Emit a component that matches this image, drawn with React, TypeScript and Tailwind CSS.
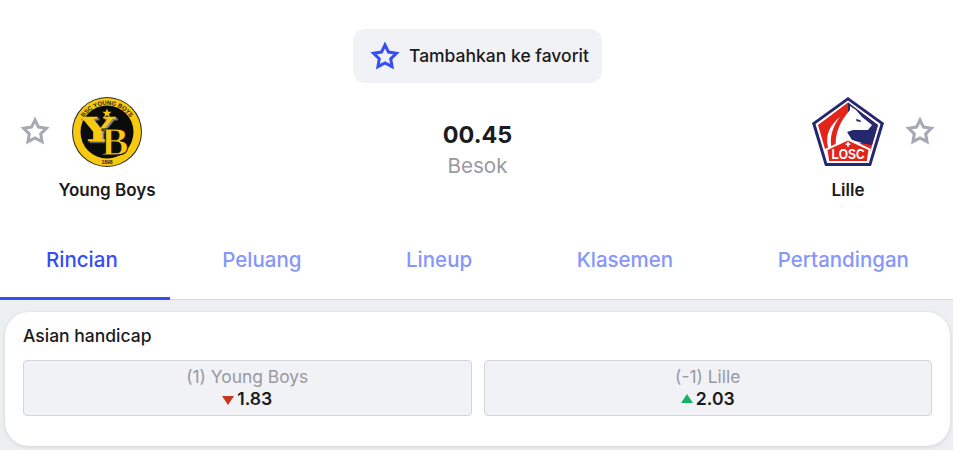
const TABS = ["Rincian", "Peluang", "Lineup", "Klasemen", "Pertandingan"];

function StarIcon({ className }: { className: string }) {
  return (
    <svg className={className} viewBox="0 0 30 30" aria-hidden="true">
      <polygon
        points="15,4 18.500,11.100 26.400,12.300 20.700,17.850 22.050,25.700 15,22 7.950,25.700 9.300,17.850 3.600,12.300 11.500,11.100"
        fill="none"
        stroke="currentColor"
        strokeWidth="3"
        strokeMiterlimit="6"
      />
    </svg>
  );
}

function YoungBoysLogo() {
  return (
    <svg width="70" height="70" viewBox="0 0 70 70" aria-hidden="true">
      <defs>
        <path id="yb-top" d="M7.800 35a27.200 27.200 0 0 1 54.400 0" />
        <filter id="yb-shadow" x="-20%" y="-20%" width="140%" height="140%">
          <feDropShadow dx="1.200" dy="1.500" stdDeviation="0" floodColor="#8d8d85" />
        </filter>
      </defs>
      <circle cx="35" cy="35" r="35" fill="#2a2a22" />
      <circle cx="35" cy="35" r="34" fill="#f8c90e" />
      <circle cx="35" cy="35" r="26.500" fill="#0b0b0b" />
      <text fontSize="6" fontWeight="700" fill="#20201a" fontFamily="Liberation Sans, sans-serif">
        <textPath href="#yb-top" startOffset="50%" textAnchor="middle">
          BSC YOUNG BOYS
        </textPath>
      </text>
      <text x="35" y="66.500" textAnchor="middle" fontSize="5" fontWeight="700" fill="#20201a" fontFamily="Liberation Sans, sans-serif">
        1898
      </text>
      <polygon points="35,11.500 36.200,14.700 39.600,14.800 36.900,16.900 37.900,20.200 35,18.300 32.100,20.200 33.100,16.900 30.400,14.800 33.800,14.700" fill="#f8c90e" />
      <text
        transform="translate(25.500 43.500) scale(1.5 1)"
        textAnchor="middle"
        fontSize="35"
        fontWeight="700"
        fill="#f8c90e"
        stroke="#f8c90e"
        strokeWidth="0.6"
        filter="url(#yb-shadow)"
        fontFamily="Liberation Serif, serif"
      >
        Y
      </text>
      <text
        x="43"
        y="58"
        textAnchor="middle"
        fontSize="41"
        fontWeight="700"
        fill="#f8c90e"
        stroke="#0b0b0b"
        strokeWidth="1"
        fontFamily="Liberation Serif, serif"
      >
        B
      </text>
    </svg>
  );
}

function LilleLogo() {
  return (
    <svg width="72" height="70" viewBox="0 0 72 70" aria-hidden="true">
      <polygon points="36,0 72,26 59,69 13,69 0,26" fill="#24286f" />
      <polygon points="36,3.500 68.500,27 56.800,66 15.200,66 3.500,27" fill="#ffffff" />
      <polygon points="36,5.500 66,28 55.500,64 16.500,64 6,28" fill="#e3241b" />
      <path d="M36 5.500l30 22.500-6 20-24-4z" fill="#24286f" />
      <path d="M38 9l6 4 6 7 10 8-4 5H41l-6 2 5 8 10 3-14 2-11 6c-3-10-1-25 13-41z" fill="#ffffff" />
      <path d="M28 20c-10 8-15 18-12 30l4 2c-3-10 0-22 8-32z" fill="#ffffff" />
      <path d="M44 22l4 1 1.500 2-5-.8z" fill="#24286f" />
      <polygon points="36,41 59,52 56.800,66 15.200,66 13,52" fill="#ffffff" />
      <polygon points="36,43.500 56.500,53 54.800,64 17.200,64 15.500,53" fill="#e3241b" />
      <rect x="35.200" y="44.800" width="1.600" height="5" fill="#ffffff" />
      <rect x="33.700" y="46.400" width="4.600" height="1.600" fill="#ffffff" />
      <text
        transform="translate(36 61.500) scale(0.85 1)"
        textAnchor="middle"
        fontSize="14"
        fontWeight="700"
        fill="#ffffff"
        fontFamily="Liberation Sans, sans-serif"
      >
        LOSC
      </text>
    </svg>
  );
}

function OddsBox({ label, value, up }: { label: string; value: string; up: boolean }) {
  return (
    <div className="flex h-14 flex-1 flex-col items-center justify-center rounded border border-[#d4d5d9] bg-[#f1f2f6]">
      <span className="text-[17.4px] leading-[22px] text-[#99999f]">{label}</span>
      <span className="flex items-center gap-[3px] text-[17.6px] font-semibold leading-[22px] text-[#1b1b20]">
        {up ? (
          <span className="mb-[2px] h-0 w-0 border-x-[6px] border-b-[9px] border-x-transparent border-b-[#15b168]" />
        ) : (
          <span className="mt-[3px] h-0 w-0 border-x-[6px] border-t-[9px] border-x-transparent border-t-[#c7361f]" />
        )}
        {value}
      </span>
    </div>
  );
}

export default function App() {
  return (
    <div className="h-[450px] w-[953px] overflow-hidden bg-white font-['Inter',sans-serif] text-[#1b1b20]">
      <div className="flex justify-center pt-[29px] pl-[2px]">
        <button className="flex h-[54px] w-[249px] items-center gap-[9px] rounded-xl bg-[#f1f2f6] pl-[17px] text-[17.5px] font-medium">
          <StarIcon className="h-[30px] w-[30px] text-[#374df5]" />
          Tambahkan ke favorit
        </button>
      </div>

      <div className="mt-[14px] flex h-[103px] items-start pl-[20px] pr-[18px]">
        <div className="flex flex-1 items-start">
          <StarIcon className="mt-[19px] h-[30px] w-[30px] text-[#a4a9b3]" />
          <div className="ml-[2px] flex w-[110px] flex-col items-center">
            <YoungBoysLogo />
            <span className="mt-[12px] text-[17px] font-semibold leading-[22px]">Young Boys</span>
          </div>
        </div>

        <div className="flex flex-col items-center pt-[23px]">
          <span className="text-[23.4px] font-bold leading-[30px]">00.45</span>
          <span className="mt-[1px] text-[20.6px] leading-[30px] text-[#99999f]">Besok</span>
        </div>

        <div className="flex flex-1 items-start justify-end">
          <div className="flex w-[72px] flex-col items-center">
            <LilleLogo />
            <span className="mt-[12px] text-[17px] font-semibold leading-[22px]">Lille</span>
          </div>
          <StarIcon className="ml-[21px] mt-[19px] h-[30px] w-[30px] text-[#a4a9b3]" />
        </div>
      </div>

      <div className="relative mt-[1px] flex h-[99px] items-center justify-between border-b border-[#d4d5d9] pl-[46px] pr-[44px] pt-[20px] text-[20.5px] font-medium text-[#8796fa]">
        {TABS.map((tab, i) => (
          <span key={tab} className={i === 0 ? "text-[#374df5]" : ""}>
            {tab}
          </span>
        ))}
        <div className="absolute bottom-[-1px] left-0 h-[3px] w-[170px] bg-[#374df5]" />
      </div>

      <div className="h-[151px] bg-[#edeff3] pl-[5px] pr-[3px] pt-[12px]">
        <div className="h-[134px] rounded-3xl bg-white pl-[18px] pr-[18px] pt-[13px] shadow-[0_1px_4px_rgba(0,0,0,0.12)]">
          <div className="text-[17.5px] font-medium leading-[22px]">Asian handicap</div>
          <div className="mt-[13px] flex gap-3">
            <OddsBox label="(1) Young Boys" value="1.83" up={false} />
            <OddsBox label="(-1) Lille" value="2.03" up />
          </div>
        </div>
      </div>
    </div>
  );
}
